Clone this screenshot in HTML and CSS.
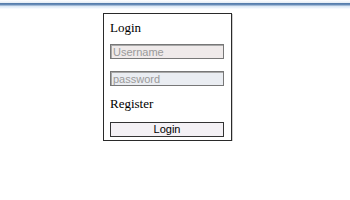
FILE: index.html
```html
<!DOCTYPE html>
<html lang="en">
<head>
    <meta charset="UTF-8">
    <title>Login</title>
    <link rel="stylesheet" href="styles.css">
</head>
<body>
    <div class="topbar"></div>

    <div class="login-box">
        <div class="title">Login</div>
        <input type="text" class="field user" placeholder="Username">
        <input type="password" class="field pass" placeholder="password">
        <div class="register">Register</div>
        <button class="login-btn">Login</button>
    </div>
</body>
</html>
```

FILE: styles.css
```css
/* Page */
body {
    margin: 0;
    background: white;
    font-family: "Liberation Serif", serif;
    color: black;
}

/* Blue strip at the top */
.topbar {
    height: 9px;
    background: linear-gradient(to bottom,
        #ffffff 0px, #e4ecf5 3px, #4f78a8 3px, #6d90bb 5px,
        #d8e6f4 6px, #eef5fc 8px, #ffffff 9px);
}

/* Login card */
.login-box {
    width: 115px;
    margin: 4px 0 0 103px;
    padding: 6px 6px 3px 6px;
    border: 1px solid #2a2a2a;
    box-shadow: 1px 1px 0 #cfcfcf;
}

.title {
    font-size: 13px;
    line-height: 16px;
}

.field {
    display: block;
    box-sizing: border-box;
    width: 114px;
    height: 15px;
    margin: 0;
    padding: 0 2px;
    border: 1px solid #777;
    box-shadow: inset 1px 1px 0 #a8a8a8;
    font-family: "Liberation Sans", Arial, sans-serif;
    font-size: 11px;
    outline: none;
}
.field::placeholder {
    color: #9a9a9a;
}

.user {
    margin-top: 8px;
    background: #efeaea;
}

.pass {
    margin-top: 12px;
    background: #eaedf2;
}

.register {
    font-size: 13px;
    line-height: 16px;
    margin-top: 10px;
}

.login-btn {
    display: block;
    box-sizing: border-box;
    width: 114px;
    height: 15px;
    margin-top: 10px;
    padding: 0;
    border: 1px solid #333;
    background: #f4f1f5;
    font-family: "Liberation Sans", Arial, sans-serif;
    font-size: 11px;
    line-height: 13px;
    color: black;
}
```
